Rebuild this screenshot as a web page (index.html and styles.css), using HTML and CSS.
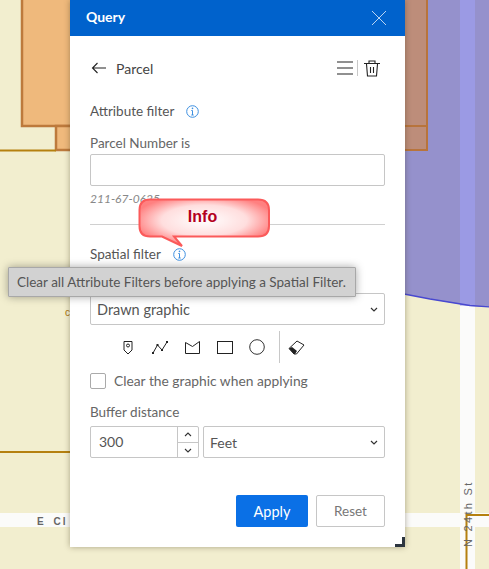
FILE: index.html
```html
<!DOCTYPE html>
<html>
<head>
  <title>Query</title>
  <link rel="stylesheet" href="styles.css">
</head>
<body>
  <div class="map">
    <svg class="map-art" width="489" height="569" viewBox="0 0 489 569">
      <rect x="22" y="-4" width="405" height="130" fill="#efb97c" stroke="#bd7a3c" stroke-width="2.500"/>
      <rect x="56" y="126" width="371" height="24" fill="#efb97c" stroke="#bd7a3c" stroke-width="2.500"/>
      <path d="M0 150.500H56M0 452H72" stroke="#b5800f" stroke-width="2" fill="none"/>
      <path d="M0 513H489V527H0Z" fill="#fbfbfa"/>
      <path d="M460 0H475V569H460Z" fill="#fbfbfa"/>
      <path d="M404 -2H491V307L470 306L430 299L404 294Z" fill="#9591cc"/>
      <path d="M404 -4H427V126H404ZM404 126H427V150H404Z" fill="#bd8d7a" stroke="#b8743c" stroke-width="2"/>
      <path d="M460 -2H475V305.500H460Z" fill="#9b9ae4"/>
      <path d="M404 294L430 299L470 305.500L491 307" stroke="#4848d0" stroke-width="1.300" fill="none"/>
      <path d="M466.500 569V515H489" stroke="#b5800f" stroke-width="2" fill="none"/>
    </svg>
    <span class="map-label label-c">c</span>
    <span class="map-label label-road">E Cl</span>
    <span class="map-label label-street">N 24th St</span>
  </div>

  <div class="panel">
    <div class="panel-head">
      <span>Query</span>
      <svg class="icon" width="16" height="16" viewBox="0 0 16 16"><path d="M1 1L15 15M15 1L1 15" stroke="#b9d4f2" fill="none"/></svg>
    </div>

    <div class="panel-body">
      <div class="back-row">
        <svg width="16" height="12" viewBox="0 0 16 12"><path d="M15 6H1.500M6.500 1L1.500 6L6.500 11" stroke="#222" stroke-width="1.100" fill="none"/></svg>
        <span class="back-title">Parcel</span>
        <svg class="menu-icon" width="16" height="14" viewBox="0 0 16 14"><path d="M0 1H16M0 7H16M0 13H16" stroke="#222" stroke-width="1.100" fill="none"/></svg>
        <span class="tool-sep short"></span>
        <svg width="16" height="17" viewBox="0 0 16 17"><path d="M0 3.500H16M5 3V1H11V3M2.500 4L3.500 16H12.500L13.500 4M6.500 7V13M9.500 7V13" stroke="#222" stroke-width="1.100" fill="none"/></svg>
      </div>

      <div class="section-title attr-title">
        Attribute filter
        <svg class="info" width="13" height="13" viewBox="0 0 13 13"><circle cx="6.500" cy="6.500" r="5.800" stroke="#3d8fe0" fill="none"/><path d="M6.500 5.500V10M5.300 10H7.700M5.300 5.500H6.500" stroke="#3d8fe0" fill="none"/><circle cx="6.500" cy="3.400" r=".8" fill="#3d8fe0"/></svg>
      </div>

      <div class="field-label">Parcel Number is</div>
      <div class="box parcel-input"></div>
      <div class="hint">211-67-0625</div>
      <div class="divider"></div>

      <div class="section-title spatial-title">
        Spatial filter
        <svg class="info" width="13" height="13" viewBox="0 0 13 13"><circle cx="6.500" cy="6.500" r="5.800" stroke="#3d8fe0" fill="none"/><path d="M6.500 5.500V10M5.300 10H7.700M5.300 5.500H6.500" stroke="#3d8fe0" fill="none"/><circle cx="6.500" cy="3.400" r=".8" fill="#3d8fe0"/></svg>
      </div>

      <div class="box select source-select">
        <span>Drawn graphic</span>
        <svg width="8" height="5" viewBox="0 0 8 5"><path d="M1 1L4 4L7 1" stroke="#333" stroke-width="1.200" fill="none"/></svg>
      </div>

      <div class="draw-tools">
        <svg width="10" height="15" viewBox="0 0 10 15"><path d="M1 1.500H9V10L5 14L1 10Z" stroke="#222" fill="none"/><circle cx="5" cy="5.500" r="1.500" stroke="#222" fill="none"/></svg>
        <svg width="16" height="13" viewBox="0 0 16 13"><path d="M1 12L5.500 4L10 9L15 1" stroke="#222" fill="none"/><path d="M0 11H2V13H0ZM4.500 3H6.500V5H4.500ZM9 8H11V10H9ZM14 0H16V2H14Z" fill="#222"/></svg>
        <svg width="15" height="13" viewBox="0 0 15 13"><path d="M.5 1.500L7.500 5.500L14.500 .5V12.500H.5Z" stroke="#222" fill="none"/></svg>
        <svg width="16" height="13" viewBox="0 0 16 13"><rect x=".5" y=".5" width="15" height="12" stroke="#222" fill="none"/></svg>
        <svg width="16" height="16" viewBox="0 0 16 16"><circle cx="8" cy="8" r="7.300" stroke="#333" fill="none"/></svg>
        <span class="tool-sep tall"></span>
        <svg width="17" height="15" viewBox="0 0 17 15"><path d="M1 8.500L9 1L16 5L8.500 14H6Z" stroke="#222" fill="none"/><path d="M1 8.500L4 7L9 11L7 14H6Z" fill="#222"/></svg>
      </div>

      <label class="check-row">
        <span class="check"></span>
        <span>Clear the graphic when applying</span>
      </label>

      <div class="field-label buffer-label">Buffer distance</div>
      <div class="buffer-row">
        <div class="box number">
          <span class="number-value">300</span>
          <div class="spin">
            <div><svg width="8" height="5" viewBox="0 0 8 5"><path d="M1 4L4 1L7 4" stroke="#333" stroke-width="1.100" fill="none"/></svg></div>
            <div><svg width="8" height="5" viewBox="0 0 8 5"><path d="M1 1L4 4L7 1" stroke="#333" stroke-width="1.100" fill="none"/></svg></div>
          </div>
        </div>
        <div class="box select unit-select">
          <span>Feet</span>
          <svg width="8" height="5" viewBox="0 0 8 5"><path d="M1 1L4 4L7 1" stroke="#333" stroke-width="1.200" fill="none"/></svg>
        </div>
      </div>

      <div class="actions">
        <button class="btn btn-apply">Apply</button>
        <button class="btn btn-reset">Reset</button>
      </div>
    </div>
    <span class="resize"></span>
  </div>

  <div class="callout">
    <svg width="136" height="52" viewBox="0 0 136 52">
      <defs>
        <radialGradient id="calloutfill" cx=".5" cy=".45" r=".55">
          <stop offset="0" stop-color="#ffffff"/>
          <stop offset=".6" stop-color="#ffdede"/>
          <stop offset="1" stop-color="#ff8080"/>
        </radialGradient>
      </defs>
      <path d="M12 1.500H120Q131 1.500 131 12V28Q131 38.500 120 38.500H36L44 48L24 38.500H12Q1.500 38.500 1.500 28V12Q1.500 1.500 12 1.500Z" fill="url(#calloutfill)" stroke="#fb5a5a" stroke-width="2"/>
    </svg>
    <span class="callout-text">Info</span>
  </div>

  <div class="tooltip">Clear all Attribute Filters before applying a Spatial Filter.</div>
</body>
</html>
```
FILE: styles.css
```css
html, body {
  margin: 0;
  padding: 0;
}

body {
  position: relative;
  width: 489px;
  height: 569px;
  overflow: hidden;
  background: #f2eecf;
  font-family: "Lato", "Open Sans", sans-serif;
  font-size: 13px;
  color: #555;
}

.map {
  position: absolute;
  left: 0;
  top: 0;
  width: 489px;
  height: 569px;
}

.map-art {
  display: block;
}

.map-label {
  position: absolute;
  font-family: "Liberation Sans", sans-serif;
  font-size: 10px;
  font-weight: 700;
  color: #666;
  letter-spacing: 2px;
}

.label-c {
  left: 65px;
  top: 307px;
  color: #a8740f;
  letter-spacing: 0;
  font-weight: 400;
}

.label-road {
  left: 37px;
  top: 516px;
  word-spacing: 3px;
}

.label-street {
  left: 435px;
  top: 508px;
  width: 66px;
  font-weight: 400;
  font-size: 11px;
  transform: rotate(-90deg);
  white-space: nowrap;
  letter-spacing: 2.300px;
}

.panel {
  position: relative;
  width: 335px;
  height: 547px;
  margin-left: 70px;
  background: #fff;
  box-shadow: 0 0 6px rgba(60, 50, 20, .4);
}

.panel-head {
  display: flex;
  align-items: center;
  justify-content: space-between;
  height: 36px;
  padding: 0 18px 0 16px;
  background: #0062cc;
  color: #fff;
  font-size: 14px;
  font-weight: 700;
}

.panel-head span {
  margin-top: -4px;
}

.panel-body {
  padding: 0 20px;
}

.back-row {
  display: flex;
  align-items: center;
  height: 18px;
  padding-top: 23px;
  padding-right: 5px;
}

.back-row > svg:first-child {
  margin-left: 1px;
}

.back-title {
  flex: 1;
  margin-left: 9px;
  font-size: 14px;
  color: #444;
}

.tool-sep {
  display: block;
  width: 1px;
  background: #c8c8c8;
}

.tool-sep.short {
  height: 16px;
  margin: 0 6px 0 4px;
}

.tool-sep.tall {
  height: 32px;
  margin-right: 8px;
}

.section-title {
  display: flex;
  align-items: center;
  font-size: 13.500px;
  line-height: 18px;
  color: #555;
}

.attr-title {
  margin-top: 25px;
}

.attr-title .info {
  margin-left: 12px;
}

.spatial-title {
  margin-top: 20px;
}

.spatial-title .info {
  margin-left: 12px;
}

.field-label {
  font-size: 13.500px;
  line-height: 18px;
  color: #666;
}

.attr-title + .field-label {
  margin-top: 14px;
}

.box {
  box-sizing: border-box;
  height: 32px;
  border: 1px solid #c6c6c6;
  border-radius: 2px;
  background: #fff;
}

.parcel-input {
  margin-top: 2px;
}

.hint {
  margin-top: 4px;
  font-size: 12px;
  line-height: 18px;
  font-style: italic;
  color: #888;
}

.divider {
  height: 1px;
  margin-top: 16px;
  background: #d0d0d0;
}

.select {
  display: flex;
  align-items: center;
  justify-content: space-between;
  padding: 0 6px;
  font-size: 14.500px;
  color: #555;
}

.source-select {
  margin-top: 30px;
}

.draw-tools {
  display: flex;
  align-items: center;
  height: 32px;
  margin-top: 6px;
  padding-left: 33px;
}

.draw-tools svg:nth-child(1) {
  margin-right: 19px;
}

.draw-tools svg:nth-child(2) {
  margin-right: 17px;
}

.draw-tools svg:nth-child(3) {
  margin-right: 17px;
}

.draw-tools svg:nth-child(4) {
  margin-right: 16px;
}

.draw-tools svg:nth-child(5) {
  margin-right: 14px;
}

.check-row {
  display: flex;
  align-items: center;
  gap: 8px;
  margin-top: 9px;
  font-size: 13.800px;
  color: #666;
}

.check {
  box-sizing: border-box;
  width: 16px;
  height: 16px;
  border: 1.500px solid #aaa;
  border-radius: 2px;
}

.buffer-label {
  margin-top: 14px;
}

.buffer-row {
  display: flex;
  gap: 4px;
  margin-top: 5px;
}

.number {
  display: flex;
  width: 109px;
}

.number-value {
  flex: 1;
  padding-left: 8px;
  font-size: 14px;
  line-height: 30px;
  color: #555;
}

.spin {
  width: 20px;
  border-left: 1px solid #c6c6c6;
}

.spin div {
  display: flex;
  align-items: center;
  justify-content: center;
  height: 15px;
}

.spin div + div {
  border-top: 1px solid #c6c6c6;
}

.unit-select {
  flex: 1;
  font-size: 14px;
}

.actions {
  display: flex;
  justify-content: flex-end;
  gap: 8px;
  margin-top: 37px;
}

.btn {
  box-sizing: border-box;
  height: 32px;
  border-radius: 2px;
  font-family: inherit;
  font-size: 14.500px;
}

.btn-apply {
  width: 72px;
  border: 0;
  background: #0a70e6;
  color: #fff;
}

.btn-reset {
  width: 69px;
  border: 1px solid #c6c6c6;
  background: #fff;
  color: #777;
  font-size: 13.500px;
}

.resize {
  position: absolute;
  right: 0;
  bottom: 0;
  box-sizing: border-box;
  width: 10px;
  height: 10px;
  border-right: 3px solid #2c3540;
  border-bottom: 3px solid #2c3540;
}

.callout {
  position: absolute;
  left: 138px;
  top: 198px;
  width: 136px;
  height: 52px;
}

.callout svg {
  display: block;
}

.callout-text {
  position: absolute;
  left: 0;
  top: 10px;
  width: 129px;
  text-align: center;
  font-family: "Liberation Sans", sans-serif;
  font-size: 16px;
  font-weight: 700;
  color: #b4001e;
}

.tooltip {
  position: absolute;
  left: 8px;
  top: 267px;
  box-sizing: border-box;
  width: 348px;
  height: 30px;
  padding-left: 8px;
  border: 1px solid #a8a8a8;
  border-radius: 1px;
  background: #d2d2d2;
  box-shadow: 0 0 8px rgba(0, 0, 0, .35);
  font-size: 13.500px;
  line-height: 28px;
  color: #555;
  white-space: nowrap;
}
```
